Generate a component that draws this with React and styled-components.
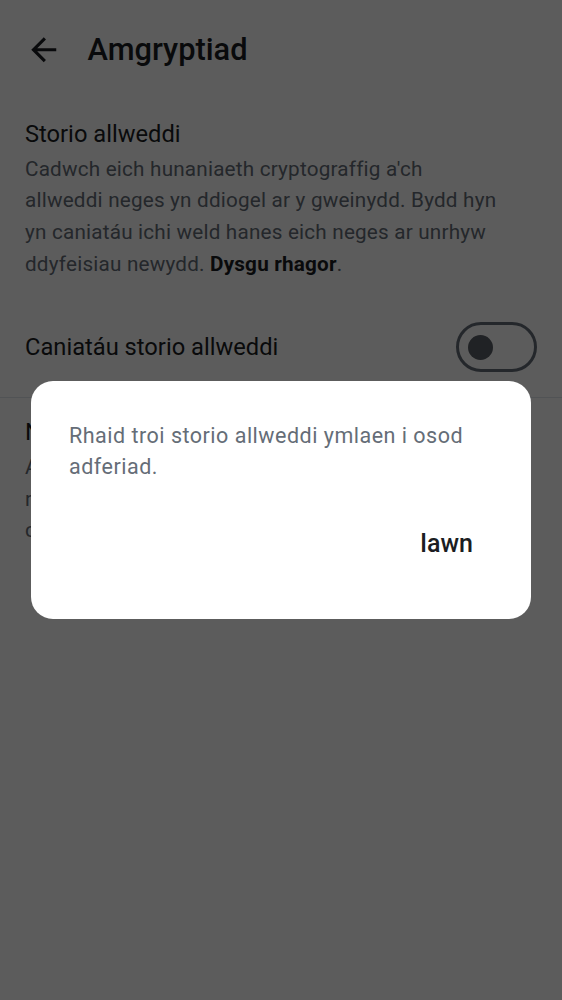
import React from "react";
import styled, { createGlobalStyle } from "styled-components";

const Global = createGlobalStyle`
  html, body { margin: 0; padding: 0; background: #ffffff; }
  body { font-family: Roboto, "Noto Sans", "Liberation Sans", sans-serif; -webkit-font-smoothing: antialiased; }
  * { box-sizing: border-box; }
`;

const Page = styled.div`
  width: 562px;
  min-height: 1000px;
  background: #ffffff;
  color: #1b1d22;
`;

const TopBar = styled.header`
  height: 100px;
  display: flex;
  align-items: center;
  padding-left: 25px;
  gap: 25px;
`;

const IconBox = styled.div`
  width: 37.5px;
  height: 37.5px;
  display: flex;
  align-items: center;
  justify-content: center;
  color: #1b1d22;
  svg { width: 37.5px; height: 37.5px; display: block; }
`;

const Title = styled.h1`
  margin: 0;
  font-size: 30.8px;
  font-weight: 500;
  line-height: 44px;
  letter-spacing: 0;
`;

const Section = styled.section`
  padding: ${(p) => p.$pt || 16}px ${(p) => p.$pr || 25}px ${(p) => p.$pb || 0}px 25px;
`;

const ItemTitle = styled.div`
  font-size: 23.7px;
  line-height: 37.5px;
  letter-spacing: 0;
  color: #1b1d22;
`;

const Desc = styled.p`
  margin: 0;
  font-size: 20.7px;
  line-height: 31.7px;
  letter-spacing: 0.2px;
  color: #656d77;
  strong { color: #1b1d22; font-weight: 700; }
`;

const ToggleRow = styled.div`
  height: 100px;
  display: flex;
  align-items: center;
  justify-content: space-between;
  padding: 0 25px;
`;

const Track = styled.div`
  width: 81px;
  height: 50px;
  border: 3px solid #656d77;
  border-radius: 25px;
  display: flex;
  align-items: center;
  padding-left: 9px;
`;

const Thumb = styled.div`
  width: 25px;
  height: 25px;
  border-radius: 50%;
  background: #5a5f66;
`;

const Divider = styled.hr`
  margin: 0;
  border: none;
  height: 1px;
  background: #e1e6ec;
`;

const Overlay = styled.div`
  position: fixed;
  inset: 0;
  background: rgba(0, 0, 0, 0.64);
  display: flex;
  align-items: center;
  justify-content: center;
`;

const Dialog = styled.div`
  width: 500px;
  background: #ffffff;
  border-radius: 22px;
  padding: 38.5px 38px 43px;
  display: flex;
  flex-direction: column;
`;

const Message = styled.p`
  margin: 0;
  font-size: 21.5px;
  line-height: 31px;
  letter-spacing: 0.5px;
  color: #656d77;
`;

const Actions = styled.div`
  display: flex;
  justify-content: flex-end;
  margin-top: 31.5px;
`;

const TextButton = styled.button`
  border: none;
  background: none;
  height: 62.5px;
  padding: 0 20px 2px;
  font-family: inherit;
  font-size: 25px;
  font-weight: 500;
  letter-spacing: 0;
  color: #1b1d22;
  cursor: pointer;
`;

export default function App() {
  return (
    <>
      <Global />
      <Page>
        <TopBar>
          <IconBox>
            <svg viewBox="0 0 24 24" fill="currentColor">
              <path d="M20 11H7.83l5.59-5.59L12 4l-8 8 8 8 1.41-1.41L7.83 13H20v-2z" />
            </svg>
          </IconBox>
          <Title>Amgryptiad</Title>
        </TopBar>
        <Section $pt={16} $pb={17} $pr={63}>
          <ItemTitle>Storio allweddi</ItemTitle>
          <Desc>
            Cadwch eich hunaniaeth cryptograffig a'ch allweddi neges yn ddiogel ar y
            gweinydd. Bydd hyn yn caniatáu ichi weld hanes eich neges ar unrhyw
            ddyfeisiau newydd. <strong>Dysgu rhagor</strong>.
          </Desc>
        </Section>
        <ToggleRow>
          <ItemTitle>Caniatáu storio allweddi</ItemTitle>
          <Track>
            <Thumb />
          </Track>
        </ToggleRow>
        <Divider />
        <Section $pt={16} $pr={25}>
          <ItemTitle>Nodi allwedd adfer</ItemTitle>
          <Desc>
            Adferwch eich hunaniaeth a hanes eich negeseuon
            <br />
            rhag ofn eich bod wedi colli pob dyfais
            <br />
            cyfredol.
          </Desc>
        </Section>
      </Page>
      <Overlay>
        <Dialog role="dialog">
          <Message>Rhaid troi storio allweddi ymlaen i osod adferiad.</Message>
          <Actions>
            <TextButton>Iawn</TextButton>
          </Actions>
        </Dialog>
      </Overlay>
    </>
  );
}
